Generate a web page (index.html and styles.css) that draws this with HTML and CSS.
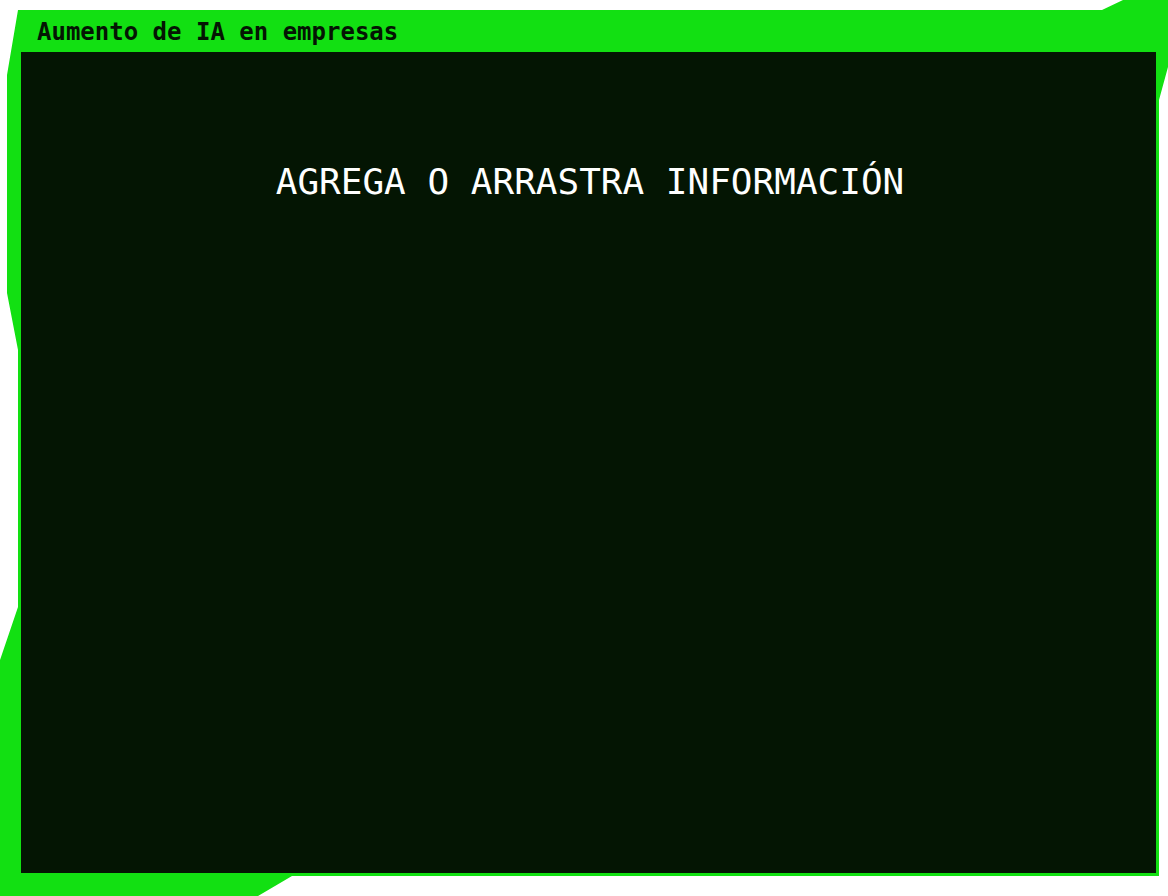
FILE: index.html
```html
<!DOCTYPE html>
<html lang="es">
<head>
<meta charset="utf-8">
<title>Aumento de IA en empresas</title>
<link rel="stylesheet" href="styles.css">
</head>
<body>
<div class="frame">
  <div class="title">Aumento de IA en empresas</div>
  <div class="panel">
    <div class="drop">AGREGA O ARRASTRA INFORMACIÓN</div>
  </div>
</div>
</body>
</html>
```

FILE: styles.css
```css
html, body {
  margin: 0;
  padding: 0;
  background: #ffffff;
}
.frame {
  width: 1168px;
  height: 896px;
  box-sizing: border-box;
  padding: 10px 12px 23px 21px;
  display: flex;
  flex-direction: column;
  background: #12e012;
  clip-path: polygon(18px 10px, 1102px 10px, 1123px 0px, 1168px 0px, 1168px 67px, 1159px 100px, 1159px 876px, 292px 876px, 258px 896px, 0px 896px, 0px 660px, 18px 607px, 18px 350px, 7px 293px, 7px 75px);
}
.title {
  height: 42px;
  box-sizing: border-box;
  padding-top: 3px;
  line-height: 39px;
  padding-left: 16px;
  font-family: "DejaVu Sans Mono", "Liberation Mono", monospace;
  font-weight: bold;
  font-size: 24px;
  color: #041503;
  white-space: nowrap;
}
.panel {
  flex: 1;
  background: #041503;
  display: flex;
  flex-direction: column;
  align-items: center;
  padding-top: 108px;
}
.drop {
  font-family: "DejaVu Sans Mono", "Liberation Mono", monospace;
  font-size: 36px;
  line-height: 44px;
  color: #ffffff;
  padding-left: 3px;
  white-space: nowrap;
}
```
